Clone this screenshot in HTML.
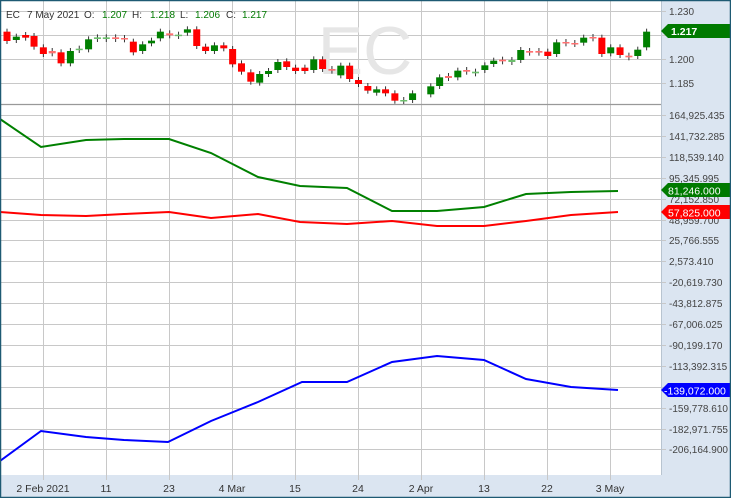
<!DOCTYPE html>
<html><head><meta charset="utf-8"><style>
html,body{margin:0;padding:0;background:#fff}
svg{display:block;font-family:"Liberation Sans",sans-serif}
</style></head><body>
<svg id="s" width="731" height="498" xmlns="http://www.w3.org/2000/svg">
<rect x="0" y="0" width="731" height="498" fill="#fff"/>
<rect x="661" y="0" width="70" height="498" fill="#dbe5f1"/>
<rect x="0" y="475" width="731" height="23" fill="#dbe5f1"/>
<g id="grid" stroke="#c8c8c8" stroke-width="1"></g>
<line x1="0" y1="104.5" x2="661" y2="104.5" stroke="#999" stroke-width="1.2"/>
<line x1="661.5" y1="0" x2="661.5" y2="475" stroke="#b8c4d0"/>
<text x="365" y="74" font-size="68" fill="#e6e6e6" text-anchor="middle">EC</text>
<g id="candles"></g>
<g font-size="10" fill="#333">
<text x="6" y="18">EC</text><text x="27" y="18">7 May 2021</text><text x="84" y="18">O:</text><text x="132" y="18">H:</text><text x="180" y="18">L:</text><text x="226" y="18">C:</text>
<g fill="#007a00"><text x="102" y="18">1.207</text><text x="150" y="18">1.218</text><text x="195" y="18">1.206</text><text x="242" y="18">1.217</text></g>
</g>
<polyline fill="none" stroke="#008000" stroke-width="2" points="0,119 41,147 86,140 124,139 169,139 211,153 258,177 300,186 347,188 392,211 437,211 484,207 526,194 571,192 618,191"/>
<polyline fill="none" stroke="#ff0000" stroke-width="2" points="0,212 41,215 86,216 124,214 169,212 211,218 258,214 300,222 347,224 392,221 437,226 484,226 526,221 571,215 618,212"/>
<polyline fill="none" stroke="#0000ff" stroke-width="2" points="0,461 41,431 86,437 124,440 168,442 211,421 258,402 302,382 347,382 392,362 437,356 484,360 526,379 571,387 618,390"/>
<g id="labels" font-size="10" fill="#444"></g>
<g font-size="10.5" fill="#fff">
<polygon points="661,31 668,24 730,24 730,38 668,38" fill="#007a00"/><text x="671" y="35" font-weight="bold">1.217</text>
<polygon points="661,190 668,183 730,183 730,197 668,197" fill="#007a00"/><text x="668" y="194.5">81,246.000</text>
<polygon points="661,212 668,205 730,205 730,219 668,219" fill="#ff0000"/><text x="668" y="216.5">57,825.000</text>
<polygon points="661,390 668,383 730,383 730,397 668,397" fill="#0000ff"/><text x="664" y="394.5">-139,072.000</text>
</g>
<g font-size="10.5" fill="#333" text-anchor="middle">
<text x="43" y="492">2 Feb 2021</text><text x="106" y="492">11</text><text x="169" y="492">23</text><text x="232" y="492">4 Mar</text><text x="295" y="492">15</text><text x="358" y="492">24</text><text x="421" y="492">2 Apr</text><text x="484" y="492">13</text><text x="547" y="492">22</text><text x="610" y="492">3 May</text>
</g>
<rect x="0.5" y="0.5" width="730" height="497" fill="none" stroke="#1e5a73" stroke-width="1.5"/>
</svg>
<script>
var NS="http://www.w3.org/2000/svg";
function el(p,t,a){var e=document.createElementNS(NS,t);for(var k in a)e.setAttribute(k,a[k]);p.appendChild(e);return e;}
var g=document.getElementById("grid");
var xs=[43,106,169,232,295,358,421,484,547,610];
xs.forEach(function(x){el(g,"line",{x1:x+.5,y1:0,x2:x+.5,y2:480});});
[11,35,59,83].forEach(function(y){el(g,"line",{x1:0,y1:y+.5,x2:666,y2:y+.5});});
var L=["164,925.435","141,732.285","118,539.140","95,345.995","72,152.850","48,959.700","25,766.555","2,573.410","-20,619.730","-43,812.875","-67,006.025","-90,199.170","-113,392.315","-136,585.460","-159,778.610","-182,971.755","-206,164.900"];
var lb=document.getElementById("labels");
L.forEach(function(t,i){var y=Math.round(115+i*20.9);el(g,"line",{x1:0,y1:y+.5,x2:666,y2:y+.5});if(i!=13){var e=el(lb,"text",{x:669,y:y+4});e.textContent=t;}});
[["1.230",11],["1.200",59],["1.185",83]].forEach(function(a){var e=el(lb,"text",{x:669,y:a[1]+4});e.textContent=a[0];el(g,"line",{x1:661,y1:a[1]+.5,x2:666,y2:a[1]+.5});});
var C=[[15,'r',95,123],[35,'g',110,120],[55,'r',105,113],[73,'r',108,140],[93,'r',142,162],[112,'r',153,160],[131,'r',157,190],[151,'g',153,190],[170,'g',146,150],[190,'g',118,148],[209,'g',112,117],[228,'g',112,117],[248,'r',112,117],[267,'r',114,118],[286,'r',125,157],[306,'g',133,153],[325,'g',122,130],[344,'g',95,115],[364,'r',100,106],[383,'g',104,108],[402,'g',88,98],[422,'r',88,138],[441,'r',140,153],[460,'g',136,153],[480,'r',136,145],[499,'r',147,193],[518,'r',190,215],[538,'r',217,245],[557,'g',222,248],[576,'g',213,222],[596,'g',186,210],[615,'r',184,201],[634,'r',203,213],[654,'r',203,213],[673,'g',178,210],[692,'r',178,207],[712,'r',207,212],[731,'g',197,226],[750,'r',197,237],[769,'r',240,252],[789,'r',258,272],[808,'g',268,278],[827,'r',268,280],[847,'r',280,302],[866,'g',300,303],[885,'g',280,300],[924,'g',259,283],[943,'g',232,258],[962,'r',228,234],[982,'g',212,232],[1001,'r',210,215],[1020,'g',215,220],[1040,'g',196,210],[1059,'g',182,192],[1078,'r',179,184],[1098,'g',180,186],[1117,'g',150,180],[1136,'r',153,158],[1156,'r',153,158],[1175,'r',155,168],[1194,'g',127,162],[1214,'r',126,130],[1233,'r',129,132],[1252,'g',113,128],[1272,'r',111,115],[1291,'r',113,162],[1310,'g',142,160],[1330,'r',142,165],[1349,'r',167,172],[1368,'g',149,168],[1387,'g',95,142]];
var cg=document.getElementById("candles");
C.forEach(function(c){var x=c[0]/2.145,t=c[2]/3,b=c[3]/3,h=b-t;var col=c[1]=='g'?'#008000':'#ff0000';
if(h<2.5){col=c[1]=='g'?'#6cbf6c':'#ff7070';}
el(cg,"line",{x1:x,y1:t-3,x2:x,y2:b+3,stroke:'#333','stroke-width':1});
el(cg,"rect",{x:x-3.5,y:t,width:7,height:Math.max(h,1.5),fill:col});});
</script>
</body></html>
